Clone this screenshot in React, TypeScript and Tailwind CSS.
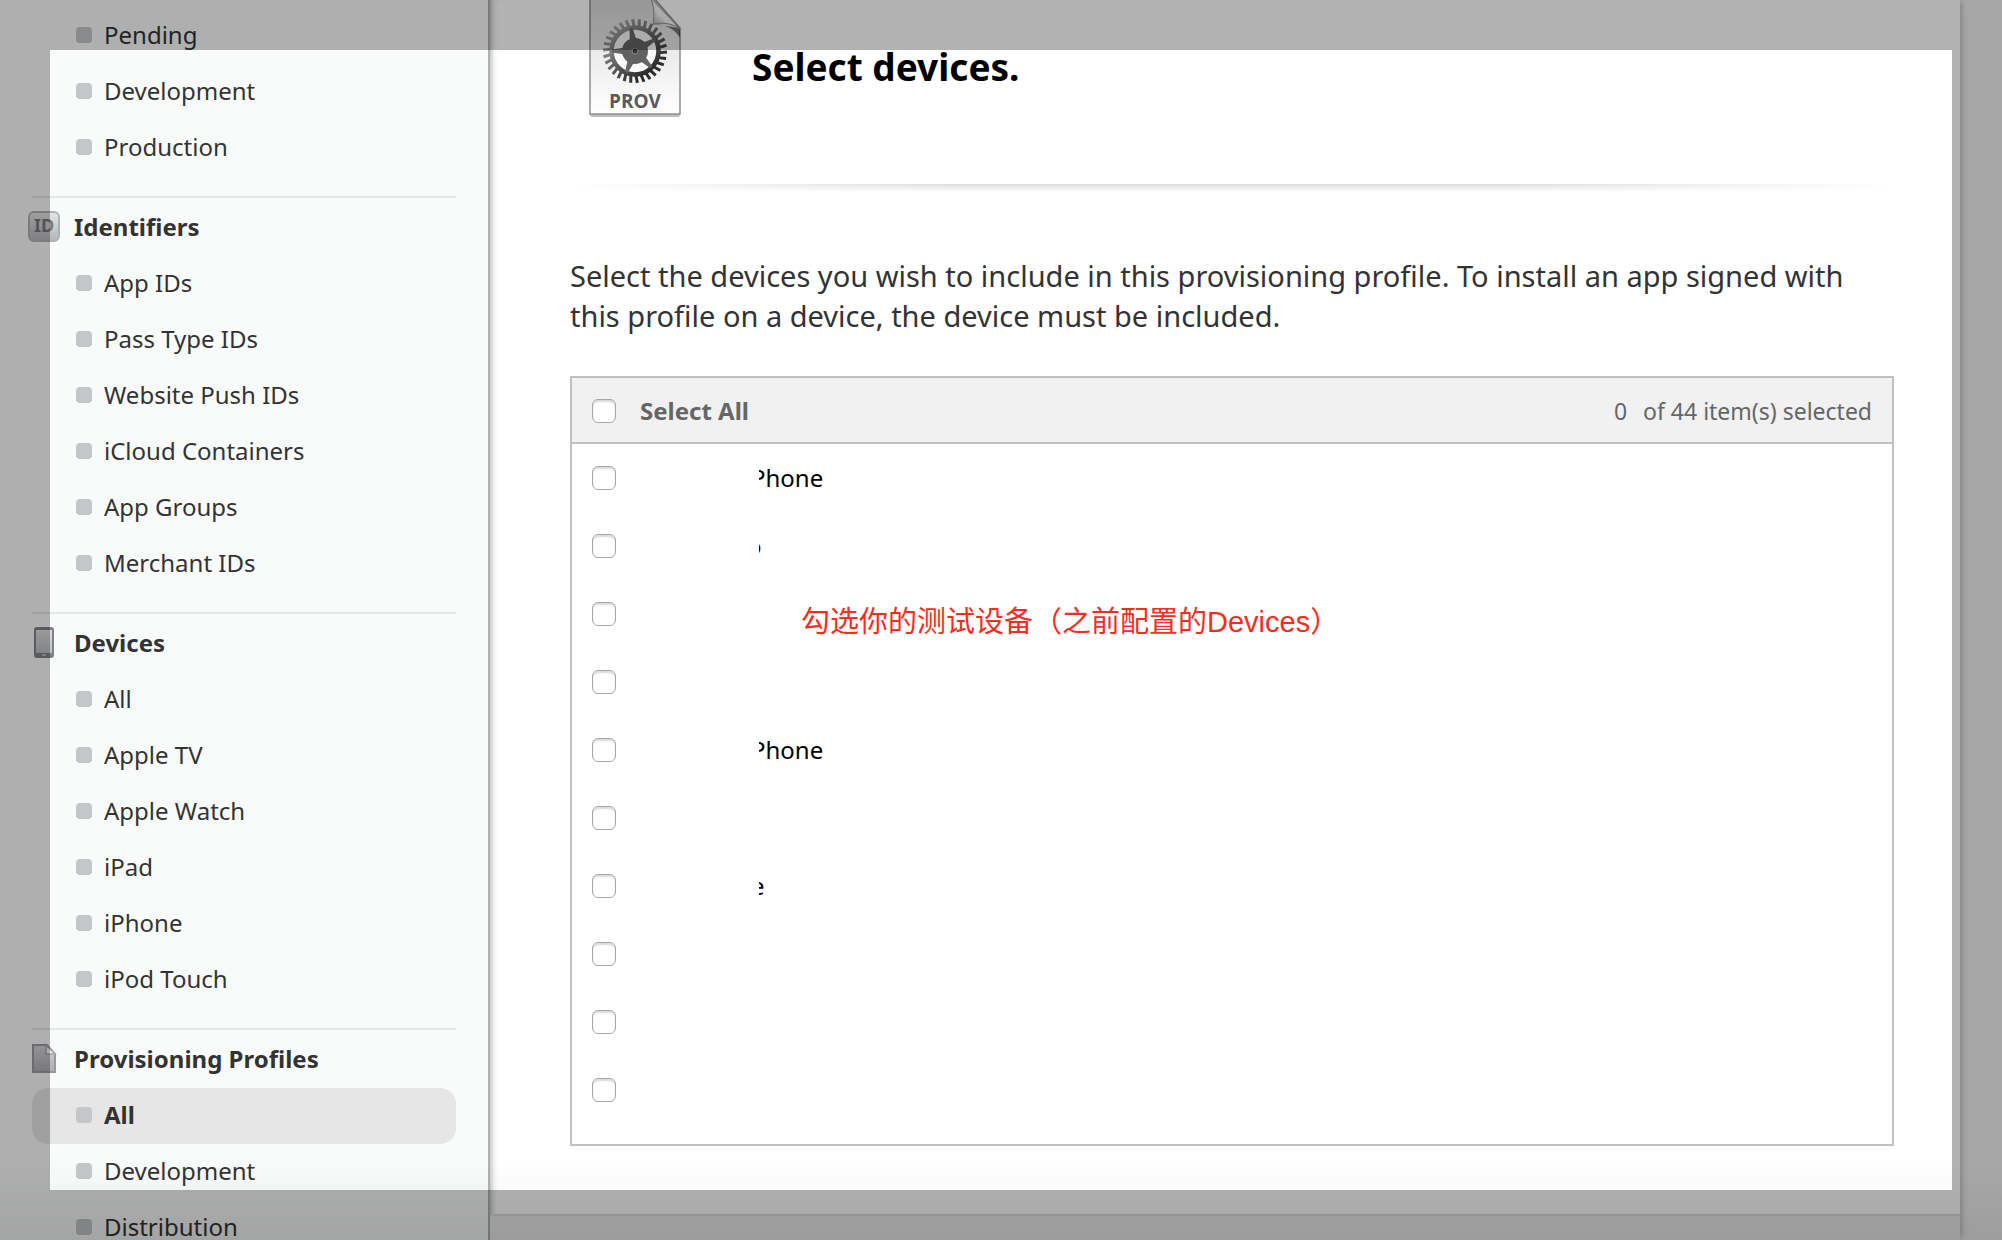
import React, { FC, ReactNode } from "react";

type Section = {
  title?: string;
  icon?: ReactNode;
  items: string[];
  active?: string;
};

const IdIcon: FC = () => (
  <svg width="32" height="32" viewBox="0 0 32 32">
    <defs>
      <linearGradient id="idFill" x1="0" y1="0" x2="0" y2="1">
        <stop offset="0" stopColor="#e6e6e8" />
        <stop offset="1" stopColor="#b4b5b9" />
      </linearGradient>
    </defs>
    <rect x="1" y="1" width="30" height="29" rx="5" fill="url(#idFill)" stroke="#b0b1b5" strokeWidth="2" />
    <text x="16" y="21" textAnchor="middle" fontSize="18" fontWeight="700" fontFamily="Noto Sans" fill="#77787b">
      ID
    </text>
  </svg>
);

const DeviceIcon: FC = () => (
  <svg width="32" height="32" viewBox="0 0 32 32">
    <defs>
      <linearGradient id="devFill" x1="0" y1="0" x2="0" y2="1">
        <stop offset="0" stopColor="#dcdcde" />
        <stop offset="1" stopColor="#bcbdc0" />
      </linearGradient>
    </defs>
    <rect x="6" y="0" width="20" height="31" rx="3" fill="#808187" />
    <rect x="8" y="3" width="16" height="23" fill="url(#devFill)" />
    <rect x="14" y="27" width="4" height="2" fill="#b4b5b9" />
  </svg>
);

const FileIcon: FC = () => (
  <svg width="32" height="32" viewBox="0 0 32 32">
    <defs>
      <linearGradient id="fileFill" x1="0" y1="0" x2="0" y2="1">
        <stop offset="0" stopColor="#d4d4d6" />
        <stop offset="1" stopColor="#abacb1" />
      </linearGradient>
    </defs>
    <path d="M5 2H19L27 11V29H5Z" fill="url(#fileFill)" stroke="#98999f" strokeWidth="2" />
    <path d="M18 2V11H27Z" fill="#f4f4f5" stroke="#a6a7ac" strokeWidth="1.5" />
  </svg>
);

const teeth = Array.from({ length: 30 }, (_, i) => i * 12);
const spokes = [-100, -30, 45, 112, 180];

const ProvIcon: FC = () => (
  <svg width="96" height="120" viewBox="0 0 96 120" className="shrink-0">
    <defs>
      <linearGradient id="page" x1="0" y1="0" x2="0" y2="1">
        <stop offset="0" stopColor="#d8d8d8" />
        <stop offset="1" stopColor="#ffffff" />
      </linearGradient>
      <linearGradient id="gear" gradientUnits="userSpaceOnUse" x1="-20" y1="-24" x2="14" y2="20">
        <stop offset="0" stopColor="#a0a0a0" />
        <stop offset="1" stopColor="#2c2c2c" />
      </linearGradient>
      <linearGradient id="fold" x1="0" y1="1" x2="0.6" y2="0.3">
        <stop offset="0" stopColor="#8a8a8a" />
        <stop offset="0.6" stopColor="#f4f4f4" />
      </linearGradient>
    </defs>
    <rect x="4" y="112" width="90" height="5" rx="2" fill="#000" opacity="0.25" />
    <path d="M4 -4H66L94 28V114H4Z" fill="url(#page)" stroke="#8e8e8e" strokeWidth="1.5" />
    <path d="M66 24Q86 24 94 38V28Z" fill="#000" opacity="0.5" />
    <path d="M64 -3Q70 8 67 24Q84 21 94 29Z" fill="url(#fold)" stroke="#8e8e8e" />
    <g transform="translate(49 51)">
      <circle r="21" fill="#fff" opacity="0.7" />
      <g stroke="url(#gear)" strokeWidth="3">
        {teeth.map((a) => {
          const t = ((a + 4) * Math.PI) / 180;
          return (
            <line
              key={a}
              x1={24 * Math.cos(t)}
              y1={24 * Math.sin(t)}
              x2={32 * Math.cos(t - 0.04)}
              y2={32 * Math.sin(t - 0.04)}
            />
          );
        })}
      </g>
      <circle r="23.5" fill="none" stroke="url(#gear)" strokeWidth="4.5" />
      {spokes.map((a) => (
        <path key={a} d="M10 -3.5L23 -1.5V1.5L10 3.5Z" fill="#666" transform={`rotate(${a})`} />
      ))}
      <circle r="13" fill="#626262" />
      <circle r="3" fill="#333" stroke="#8a8a8a" />
    </g>
    <text x="49" y="108" textAnchor="middle" fontSize="19" fontWeight="700" fontFamily="Open Sans" fill="#5a5a5a">
      PROV
    </text>
  </svg>
);

const sections: Section[] = [
  { items: ["Pending", "Development", "Production"] },
  {
    title: "Identifiers",
    icon: <IdIcon />,
    items: ["App IDs", "Pass Type IDs", "Website Push IDs", "iCloud Containers", "App Groups", "Merchant IDs"],
  },
  {
    title: "Devices",
    icon: <DeviceIcon />,
    items: ["All", "Apple TV", "Apple Watch", "iPad", "iPhone", "iPod Touch"],
  },
  {
    title: "Provisioning Profiles",
    icon: <FileIcon />,
    items: ["All", "Development", "Distribution"],
    active: "All",
  },
];

// device names are masked, only the end of some of them stays visible
const devices = [
  { name: "Phone", mask: "-ml-2 block" },
  { name: "o", mask: "-ml-3 block" },
  { name: "", mask: "" },
  { name: "", mask: "" },
  { name: "Phone", mask: "-ml-2 block" },
  { name: "", mask: "" },
  { name: "e", mask: "-ml-2 block" },
  { name: "", mask: "" },
  { name: "", mask: "" },
  { name: "", mask: "" },
];

const checkboxClass =
  "appearance-none size-6 shrink-0 rounded-md border border-[#a8a8a8] bg-white shadow-[inset_0_2px_2px_#d8d8d8]";

const Sidebar: FC = () => (
  <nav className="w-[490px] shrink-0 border-r-2 border-[#b0b0b0] bg-[#f9fbfa] pt-2 pr-8 pl-8 text-[#333]">
    {sections.map((section, i) => (
      <section key={i} className={section.title ? "mt-5 border-t-2 border-[#e6e8e7] pt-0.5" : ""}>
        {section.title && (
          <h2 className="-ml-1 flex h-14 items-center gap-3.5 pb-0.5 text-2xl font-bold">
            {section.icon}
            {section.title}
          </h2>
        )}
        <ul>
          {section.items.map((item) => (
            <li key={item}>
              <a
                href="#"
                className={
                  item === section.active
                    ? "flex h-14 items-center gap-3 rounded-2xl bg-[#e6e6e6] pb-0.5 pl-11 text-2xl font-bold"
                    : "flex h-14 items-center gap-3 pb-0.5 pl-11 text-2xl"
                }
              >
                <span className="size-4 rounded-sm bg-[#c5c6ca]"></span>
                {item}
              </a>
            </li>
          ))}
        </ul>
      </section>
    ))}
  </nav>
);

const DeviceList: FC = () => (
  <div className="border-2 border-[#c0c0c0]">
    <div className="flex h-[66px] items-center border-b-2 border-[#c0c0c0] bg-[#f1f1f1] px-5 pt-0.5 text-[#666]">
      <label className="flex items-center gap-6 text-2xl font-bold">
        <input type="checkbox" className={checkboxClass} />
        Select All
      </label>
      <p className="ml-auto flex gap-4 text-[23px]">
        <span>0</span>
        <span>of 44 item(s) selected</span>
      </p>
    </div>
    <ul className="pb-5">
      {devices.map((device, i) => (
        <li key={i}>
          <label className="flex h-[68px] items-center gap-[143px] px-5 text-2xl text-black">
            <input type="checkbox" aria-label="Device" className={checkboxClass} />
            <span className="overflow-hidden">
              <span className={device.mask}>{device.name}</span>
            </span>
          </label>
        </li>
      ))}
    </ul>
  </div>
);

const App: FC = () => {
  return (
    <div className="relative flex h-screen overflow-hidden bg-[#f0f0f0] font-['Noto_Sans','Noto_Sans_CJK_SC',sans-serif]">
      <Sidebar />
      <main className="relative mr-[42px] flex-1 bg-white shadow-[inset_6px_0_6px_-5px_#aaa,4px_0_6px_-2px_#bbb]">
        <div className="pr-[66px] pl-20">
          <header className="flex h-[184px] items-start gap-[70px] pl-4">
            <ProvIcon />
            <h1 className="pt-10 text-[37px] leading-[54px] font-bold text-black">Select devices.</h1>
          </header>
          <div className="h-2 bg-linear-to-b from-[#dcdcdc] to-white [mask-image:linear-gradient(to_right,transparent,black_30%,black_70%,transparent)]"></div>
          <p className="pt-16 pr-10 pb-10 text-[29px] leading-10 text-[#333]">
            Select the devices you wish to include in this provisioning profile. To install an app signed with this
            profile on a device, the device must be included.
          </p>
          <DeviceList />
        </div>
        <footer className="mt-[68px] h-20 border-t-2 border-[#dedede] bg-[#eee]"></footer>
        <p className="absolute top-[601px] left-[311px] font-['Liberation_Sans','Noto_Sans_CJK_SC',sans-serif] text-[29px] text-[#fc2b1c]">
          勾选你的测试设备（之前配置的Devices）
        </p>
      </main>
      <div className="pointer-events-none absolute inset-x-0 bottom-0 h-20 bg-linear-to-b from-transparent to-black/6"></div>
      <div className="pointer-events-none absolute inset-0 border-50 border-black/30"></div>
    </div>
  );
};

export default App;
